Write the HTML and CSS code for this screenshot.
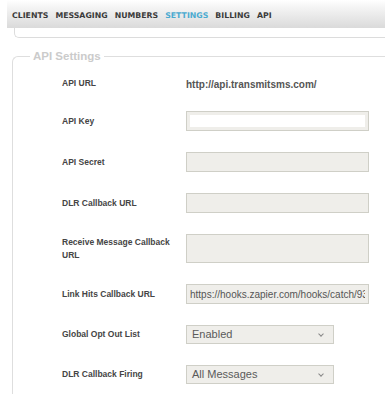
FILE: index.html
```html
<!DOCTYPE html>
<html lang="en">
<head>
  <meta charset="UTF-8" />
  <title>Settings – API</title>
  <link rel="stylesheet" href="styles.css">
</head>
<body>
  <div class="nav">
    <a href="#">CLIENTS</a>
    <a href="#">MESSAGING</a>
    <a href="#">NUMBERS</a>
    <a href="#" class="active">SETTINGS</a>
    <a href="#">BILLING</a>
    <a href="#">API</a>
  </div>

  <div class="panel"></div>

  <fieldset class="settings">
    <legend>API Settings</legend>
    <div class="grid">
      <label>API URL</label>
      <div class="value">http://api.transmitsms.com/</div>

      <label>API Key</label>
      <input type="text" class="field key" />

      <label>API Secret</label>
      <input type="text" class="field" />

      <label>DLR Callback URL</label>
      <input type="text" class="field" />

      <label>Receive Message Callback URL</label>
      <textarea class="field area"></textarea>

      <label>Link Hits Callback URL</label>
      <input type="text" class="field" value="https://hooks.zapier.com/hooks/catch/93" />

      <label>Global Opt Out List</label>
      <div class="select">Enabled<span class="chev"></span></div>

      <label>DLR Callback Firing</label>
      <div class="select">All Messages<span class="chev"></span></div>
    </div>
  </fieldset>
</body>
</html>
```

FILE: styles.css
```css
body {
  margin: 0;
  font-family: 'Liberation Sans', Arial, sans-serif;
  background: #fff;
  overflow: hidden;
}
.nav {
  margin-left: 7px;
  height: 28px;
  padding: 3px 0 0 5px;
  display: flex;
  align-items: center;
  gap: 7px;
  background: linear-gradient(#ffffff 0%, #f3f3f3 30%, #dadada 100%);
  box-sizing: border-box;
}
.nav a {
  font-family: 'DejaVu Sans', Verdana, sans-serif;
  font-size: 7.8px;
  font-weight: bold;
  color: #3a3a3a;
  text-decoration: none;
}
.nav a.active {
  color: #4aaad0;
}
.panel {
  margin-left: 14px;
  height: 9px;
  border-left: 1px solid #dcdcdc;
  border-bottom: 1px solid #dcdcdc;
  border-bottom-left-radius: 5px;
}
.settings {
  margin: 12px 0 0 12px;
  padding: 15px 0 30px 49px;
  border: 1px solid #dedede;
  border-right: none;
  border-top-left-radius: 6px;
  min-width: 0;
}
.settings legend {
  margin-left: -32px;
  padding: 0 3px;
  font-size: 11.5px;
  font-weight: bold;
  color: #cbcbcb;
}
.grid {
  display: grid;
  grid-template-columns: 124px 183px;
  row-gap: 21px;
  align-items: center;
}
.grid label {
  font-size: 8.5px;
  font-weight: bold;
  color: #454545;
  line-height: 13px;
  padding-right: 8px;
}
.value {
  height: 16px;
  margin-bottom: -3px;
  line-height: 16px;
  font-size: 10px;
  font-weight: bold;
  color: #555;
}
.field {
  box-sizing: border-box;
  width: 183px;
  height: 20px;
  margin: 0;
  padding: 0 3px;
  border: 1px solid #cfcfc7;
  background: #efeeea;
  font-family: 'Liberation Sans', Arial, sans-serif;
  font-size: 10px;
  color: #555;
  outline: none;
}
.field.key {
  background: #fff;
  box-shadow: inset 0 0 0 3px #efeeea;
}
.field.area {
  height: 29px;
  resize: none;
}
.select {
  position: relative;
  box-sizing: border-box;
  width: 148px;
  height: 19px;
  line-height: 17px;
  padding-left: 5px;
  border: 1px solid #cfcfc7;
  background: #efeeea;
  font-size: 11px;
  color: #5a5a5a;
}
.chev {
  position: absolute;
  right: 10px;
  top: 6px;
  width: 3px;
  height: 3px;
  border-right: 1px solid #888;
  border-bottom: 1px solid #888;
  transform: rotate(45deg);
}
```
